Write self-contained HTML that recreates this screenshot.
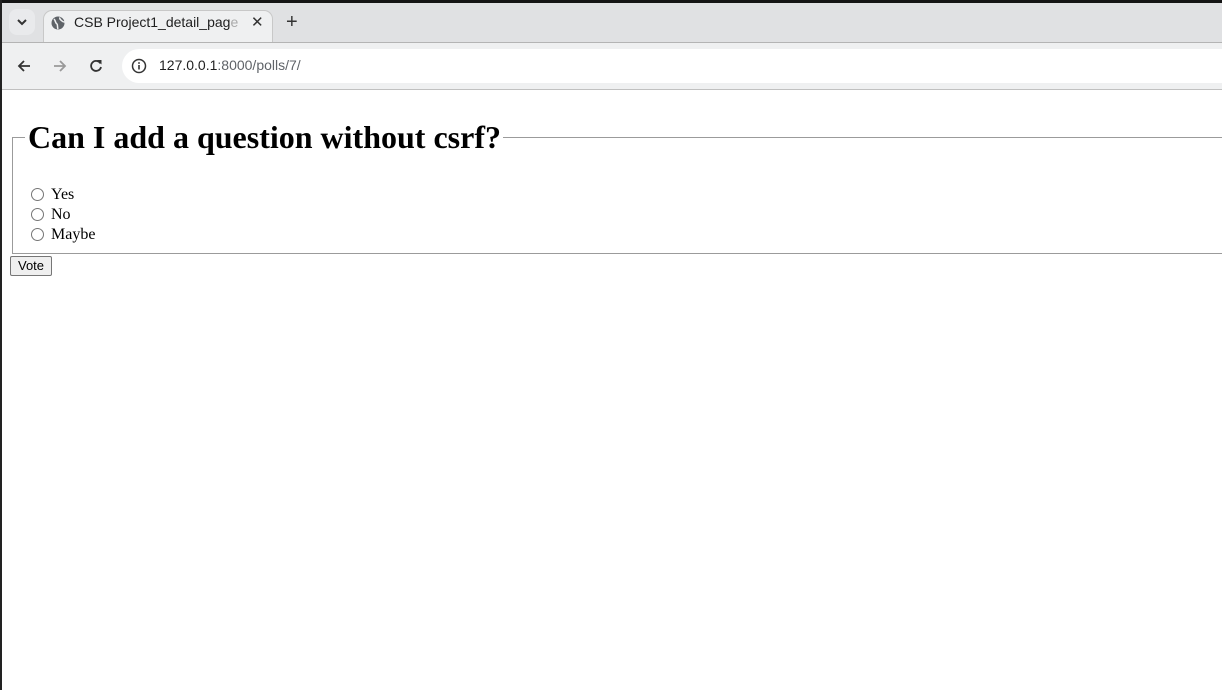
<!DOCTYPE html>
<html><head><style>
html,body{margin:0;padding:0;width:1222px;height:690px;overflow:hidden;background:#fff;font-family:"Liberation Serif",serif;}
#frame{position:absolute;left:0;top:0;width:1222px;height:690px;}
#topbar{position:absolute;left:0;top:0;width:1222px;height:3px;background:#141414;}
#leftbar{position:absolute;left:0;top:0;width:2px;height:690px;background:#222;}
#tabs{position:absolute;left:2px;top:3px;width:1220px;height:39px;background:#e0e1e3;}
#tabline{position:absolute;left:2px;top:42px;width:1220px;height:1px;background:#b4b4b4;}
#toolbar{position:absolute;left:2px;top:43px;width:1220px;height:46px;background:#eff0f1;}
#tbline{position:absolute;left:2px;top:89px;width:1220px;height:1px;background:#c0c0c0;}
.ui{font-family:"Liberation Sans",sans-serif;}
#drop{position:absolute;left:9px;top:9px;width:26px;height:26px;border-radius:8px;background:#e9eaec;}
#tab{position:absolute;left:43px;top:10px;width:230px;height:34px;background:#eff0f1;border-radius:9px 9px 0 0;border:1px solid #c8c8c8;border-bottom:none;box-sizing:border-box;}
#tabtitle{position:absolute;left:74px;top:14px;font-size:14px;color:#1f1f1f;white-space:nowrap;width:168px;overflow:hidden;}
#omni{position:absolute;left:122px;top:49px;width:1120px;height:34px;background:#fff;border-radius:17px;}
#url{position:absolute;left:159px;top:57px;font-size:14px;color:#1f1f1f;}
#url span{color:#5f6368;}
#page{position:absolute;left:2px;top:90px;width:1240px;padding:8px;box-sizing:border-box;}
#page fieldset{margin:0 2px;padding:0.35em 0.75em 0.625em;border:1px solid #9b9b9b;}
#page legend{padding:0 2px 0 3px;}
#page h1{font-size:32px;margin:21px 0;font-weight:bold;}
.row{height:20px;line-height:20px;font-size:16px;position:relative;top:2px;}
#page input[type=radio]{margin:3px 7px 0 6px;width:13px;height:13px;vertical-align:top;}
button{font-family:"Liberation Sans",sans-serif;font-size:13px;padding:0 7px;height:20px;margin-top:2px;border:1px solid #767676;border-radius:2px;background:#efefef;}
</style></head><body>
<div id="frame">
<div id="tabs"></div>
<div id="drop"></div>
<svg style="position:absolute;left:16px;top:17px" width="12" height="10"><path d="M2 3 L6 7 L10 3" stroke="#333" stroke-width="2" fill="none"/></svg>
<div id="tab"></div>
<svg style="position:absolute;left:51px;top:16px" width="14" height="14" viewBox="0 0 14 14"><circle cx="7" cy="7" r="6.5" fill="#5f6368"/><path d="M3 3 C5 5,4 7,6 8 C7 9,6 11,7 13 M9 1.5 C8 3,10 4,11 5 C12 6,13 6,13.5 6" stroke="#eff0f1" stroke-width="1.5" fill="none"/></svg>
<div id="tabtitle" class="ui">CSB Project1_detail_pag<span style="color:#aaa">e</span></div>
<div class="ui" style="position:absolute;left:251px;top:13px;font-size:15px;color:#333">✕</div>
<div class="ui" style="position:absolute;left:286px;top:11px;font-size:20px;color:#333">+</div>
<div id="tabline"></div>
<div id="toolbar"></div>
<svg style="position:absolute;left:16px;top:58px" width="16" height="16"><path d="M14 8 H3 M8 3 L3 8 L8 13" stroke="#333" stroke-width="1.8" fill="none"/></svg>
<svg style="position:absolute;left:52px;top:58px" width="16" height="16"><path d="M2 8 H13 M8 3 L13 8 L8 13" stroke="#999" stroke-width="1.8" fill="none"/></svg>
<svg style="position:absolute;left:88px;top:58px" width="16" height="16"><path d="M12.5 5.5 A5 5 0 1 0 13 9" stroke="#333" stroke-width="1.8" fill="none"/><path d="M9 2 L13.5 2 L13.5 6.5 Z" fill="#333"/></svg>
<div id="omni"></div>
<svg style="position:absolute;left:131px;top:58px" width="16" height="16"><circle cx="8" cy="8" r="6.5" stroke="#333" stroke-width="1.5" fill="none"/><rect x="7.2" y="7" width="1.6" height="4.5" fill="#333"/><rect x="7.2" y="4.2" width="1.6" height="1.6" fill="#333"/></svg>
<div id="url" class="ui">127.0.0.1<span>:8000/polls/7/</span></div>
<div id="tbline"></div>
<div id="page">
<form>
<fieldset>
<legend><h1>Can I add a question without csrf?</h1></legend>
<div class="row"><input type="radio" name="c" id="c1"><label for="c1">Yes</label></div>
<div class="row"><input type="radio" name="c" id="c2"><label for="c2">No</label></div>
<div class="row"><input type="radio" name="c" id="c3"><label for="c3">Maybe</label></div>
</fieldset>
<button type="button">Vote</button>
</form>
</div>
<div id="topbar"></div>
<div id="leftbar"></div>
</div>
</body></html>
